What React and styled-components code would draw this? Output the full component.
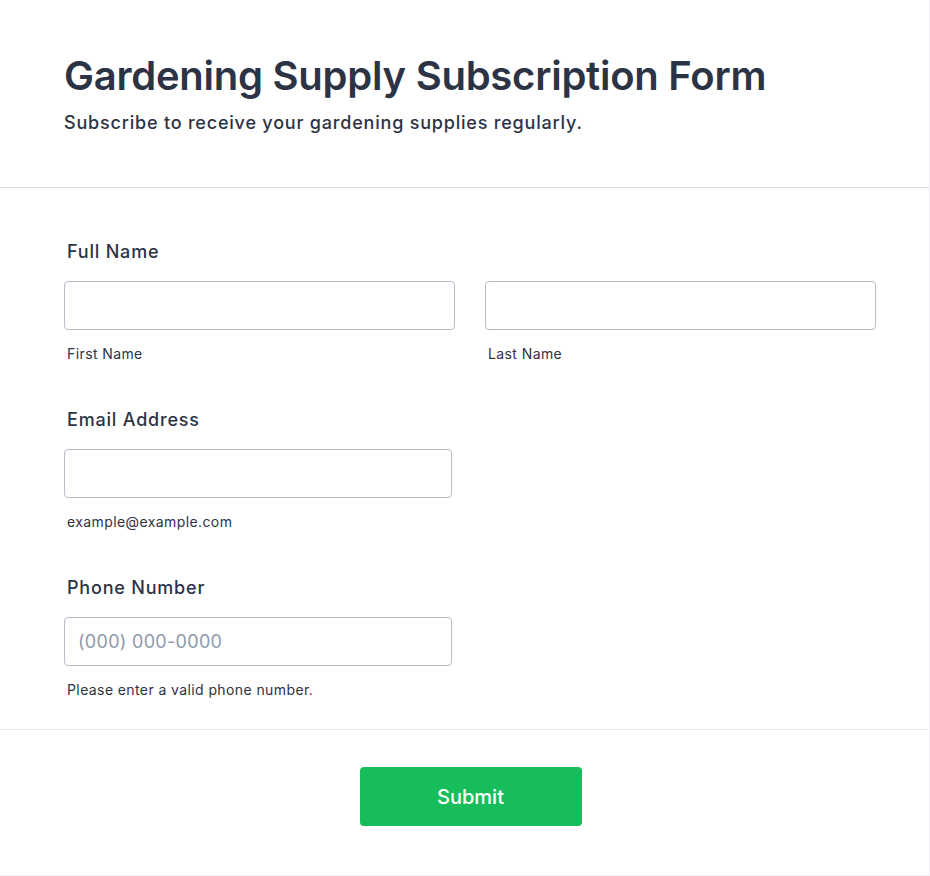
import React from 'react';
import styled, { createGlobalStyle } from 'styled-components';

const Global = createGlobalStyle`
  body {
    margin: 0;
    background: #ffffff;
    font-family: Inter, "Noto Sans", sans-serif;
    color: #2c3345;
  }
  * { box-sizing: border-box; }
`

const Card = styled.div`
  width: 930px;
  min-height: 876px;
  background: #fff;
  border-right: 1px solid #eef0f4;
  border-bottom: 1px solid #eef0f4;
`

const Header = styled.header`
  padding: 52px 64px 51px;
  border-bottom: 1px solid #d8dbe6;
`

const Title = styled.h1`
  margin: 0;
  font-size: 40px;
  line-height: 48px;
  font-weight: 600;
  letter-spacing: -0.25px;
  color: #2c3345;
`

const Subtitle = styled.p`
  margin: 9px 0 0;
  font-size: 18px;
  line-height: 27px;
  font-weight: 500;
  letter-spacing: 0.8px;
  color: #2c3345;
`

const Form = styled.form`
  padding: 50px 54px 29px 64px;
  display: flex;
  flex-direction: column;
  gap: 42px;
  border-bottom: 1px solid #eaecf1;
`

const Field = styled.div`
  display: flex;
  flex-direction: column;
`

const Label = styled.label`
  font-size: 18px;
  line-height: 27px;
  font-weight: 500;
  letter-spacing: 0.8px;
  margin: 0 0 16px 3px;
  color: #2c3345;
`

const Row = styled.div`
  display: grid;
  grid-template-columns: ${p => p.$cols || '391px 391px'};
  column-gap: 30px;
`

const Group = styled.div`
  display: flex;
  flex-direction: column;
`

const Input = styled.input`
  width: 100%;
  height: 49px;
  border: 1px solid #b8bdc9;
  border-radius: 4px;
  padding: 0 13px;
  font-family: Inter, sans-serif;
  font-size: 18px;
  color: #2c3345;
  background: #fff;
  outline: none;
  &::placeholder {
    color: #8d99ab;
    letter-spacing: 0.3px;
  }
`

const Sub = styled.span`
  margin: 13px 0 0 3px;
  font-size: 14px;
  line-height: 21px;
  letter-spacing: 0.4px;
  color: #2c3345;
`

const Footer = styled.div`
  display: flex;
  justify-content: center;
  padding: 37px 0 49px;
`

const Button = styled.button`
  width: 222px;
  height: 59px;
  margin-left: 12px;
  border: none;
  border-radius: 4px;
  background: #18bd5b;
  color: #fff;
  font-family: Inter, sans-serif;
  font-size: 20px;
  font-weight: 500;
  cursor: pointer;
`

export default function App() {
  return (
    <>
      <Global />
      <Card>
        <Header>
          <Title>Gardening Supply Subscription Form</Title>
          <Subtitle>Subscribe to receive your gardening supplies regularly.</Subtitle>
        </Header>
        <Form onSubmit={e => e.preventDefault()}>
          <Field>
            <Label>Full Name</Label>
            <Row>
              <Group>
                <Input type="text" />
                <Sub>First Name</Sub>
              </Group>
              <Group>
                <Input type="text" />
                <Sub>Last Name</Sub>
              </Group>
            </Row>
          </Field>
          <Field>
            <Label>Email Address</Label>
            <Row $cols="388px">
              <Group>
                <Input type="email" />
                <Sub>example@example.com</Sub>
              </Group>
            </Row>
          </Field>
          <Field>
            <Label>Phone Number</Label>
            <Row $cols="388px">
              <Group>
                <Input type="tel" placeholder="(000) 000-0000" />
                <Sub>Please enter a valid phone number.</Sub>
              </Group>
            </Row>
          </Field>
        </Form>
        <Footer>
          <Button type="submit">Submit</Button>
        </Footer>
      </Card>
    </>
  );
}
